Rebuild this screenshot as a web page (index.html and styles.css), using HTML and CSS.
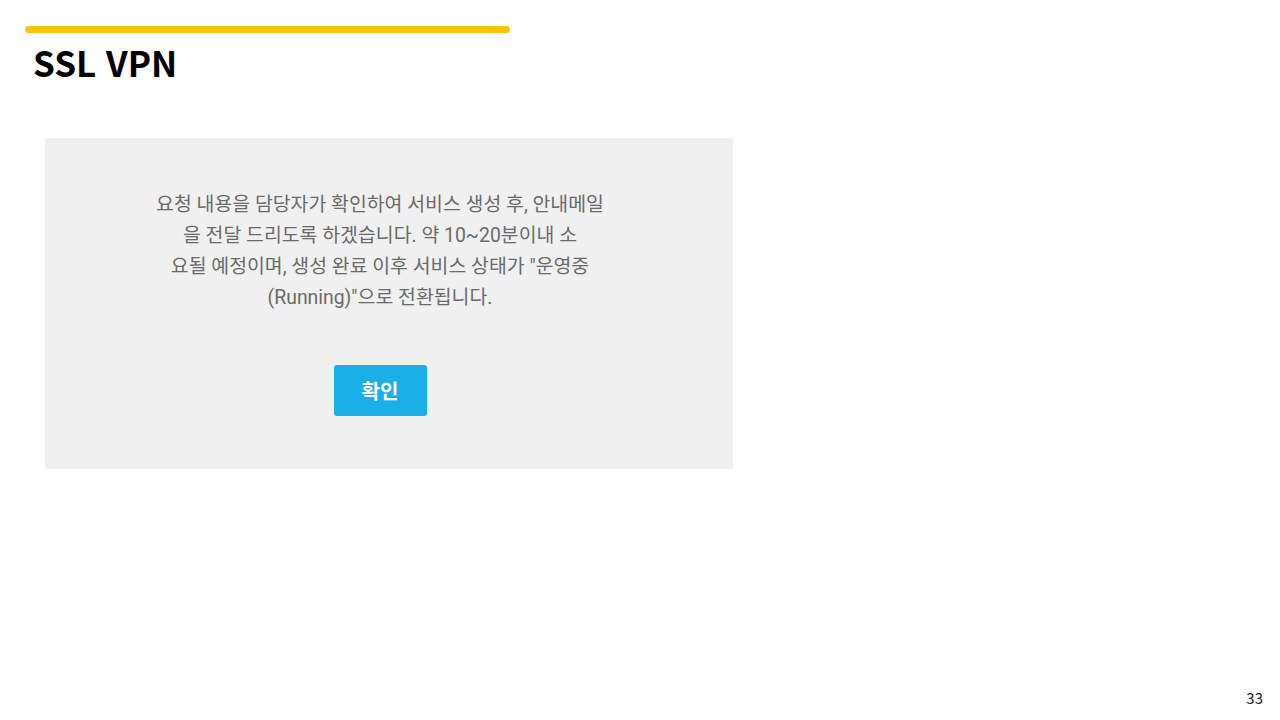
FILE: index.html
```html
<!DOCTYPE html>
<html lang="ko">
<head>
    <meta charset="UTF-8">
    <title>SSL VPN</title>
    <link rel="stylesheet" href="styles.css">
</head>
<body>
    <header class="slide-header">
        <div class="accent-bar"></div>
        <h1>SSL VPN</h1>
    </header>

    <!-- Captured dialog -->
    <section class="notice-box">
        <p class="notice-text">
            요청 내용을 담당자가 확인하여 서비스 생성 후, 안내메일<br>
            을 전달 드리도록 하겠습니다. 약 10~20분이내 소<br>
            요될 예정이며, 생성 완료 이후 서비스 상태가 "운영중<br>
            (Running)"으로 전환됩니다.
        </p>
        <button class="confirm-btn">확인</button>
    </section>

    <footer class="page-num">33</footer>
</body>
</html>
```

FILE: styles.css
```css
/* Slide basics */
html, body {
    margin: 0;
    padding: 0;
}

body {
    width: 1280px;
    height: 720px;
    background-color: #ffffff;
    font-family: "Noto Sans CJK KR", "Noto Sans", sans-serif;
    position: relative;
    overflow: hidden;
}

.slide-header {
    padding: 26px 0 0 25px;
}

.accent-bar {
    width: 485px;
    height: 7px;
    border-radius: 4px;
    background-color: #fcc30b;
}

.slide-header h1 {
    margin: 5px 0 0 8px;
    font-size: 35px;
    font-weight: 700;
    line-height: 48px;
    color: #000;
}

/* Gray dialog area */
.notice-box {
    margin: 52px 0 0 45px;
    width: 688px;
    height: 331px;
    background-color: #f0f0f0;
    display: flex;
    flex-direction: column;
    align-items: center;
    box-sizing: border-box;
    padding: 51px 18px 0 0;
}

.notice-text {
    margin: 0;
    font-family: Roboto, "Noto Sans CJK KR", sans-serif;
    font-size: 19.4px;
    line-height: 31px;
    color: #6a6a6a;
    text-align: center;
}

.confirm-btn {
    margin-top: 52px;
    width: 93px;
    height: 51px;
    border: none;
    border-radius: 3px;
    background-color: #1aafe6;
    color: #fff;
    font-family: "Noto Sans CJK KR", sans-serif;
    font-size: 20px;
    font-weight: 700;
}

.page-num {
    position: absolute;
    right: 17px;
    bottom: 12px;
    font-size: 15px;
    color: #222;
}
```
